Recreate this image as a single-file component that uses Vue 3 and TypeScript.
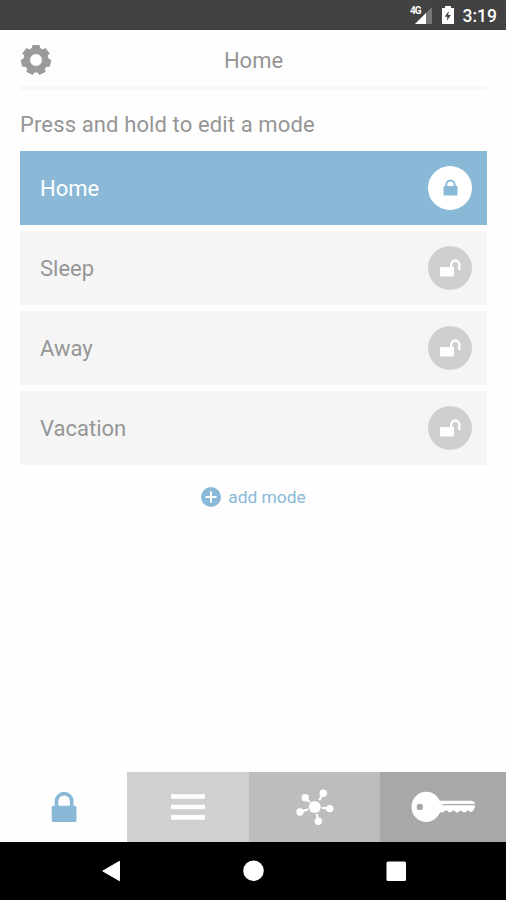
<script setup lang="ts">
import { ref } from 'vue'

interface Mode {
  name: string
}

const modes: Mode[] = [{ name: 'Home' }, { name: 'Sleep' }, { name: 'Away' }, { name: 'Vacation' }]
const active = ref('Home')

function gearPath(teeth: number, outer: number, inner: number): string {
  const step = (Math.PI * 2) / teeth
  const points: string[] = []
  for (let i = 0; i < teeth; i++) {
    const a = i * step - Math.PI / 2
    const corners: [number, number][] = [
      [-0.34, inner],
      [-0.24, outer],
      [0.24, outer],
      [0.34, inner],
    ]
    for (const [offset, r] of corners) {
      const t = a + offset * step
      points.push(`${(r * Math.cos(t)).toFixed(2)} ${(r * Math.sin(t)).toFixed(2)}`)
    }
  }
  return `M${points.join('L')}ZM6.4 0A6.4 6.4 0 1 0 -6.4 0A6.4 6.4 0 1 0 6.4 0Z`
}

const gear = gearPath(7, 14.8, 12.2)
</script>

<template>
  <div class="screen">
    <div class="status">
      <svg class="signal" width="24" height="20" viewBox="0 0 24 20">
        <path d="M22 2V19H5Z" fill="#777" />
        <path d="M16 8V19H5Z" fill="#fff" />
        <text x="0" y="9" class="network">4G</text>
      </svg>
      <svg class="battery" width="14" height="20" viewBox="0 0 14 20">
        <path d="M4 1H10V3H13V19H1V3H4Z" fill="#fff" />
        <path d="M7.8 6L3.7 11.8H6.4L5.7 16L9.9 10H7.2Z" fill="#424242" />
      </svg>
      <span class="clock">3:19</span>
    </div>

    <header class="header">
      <svg class="gear" width="32" height="32" viewBox="-16 -16 32 32">
        <path :d="gear" fill="#9a9a9a" stroke="#9a9a9a" stroke-width="1" stroke-linejoin="round" fill-rule="evenodd" />
      </svg>
      <h1 class="title">Home</h1>
    </header>

    <main class="content">
      <p class="hint">Press and hold to edit a mode</p>
      <div class="modes">
        <div
          v-for="mode in modes"
          :key="mode.name"
          class="mode"
          :class="{ active: mode.name === active }"
          @click="active = mode.name"
        >
          <span class="name">{{ mode.name }}</span>
          <span class="badge">
            <svg v-if="mode.name === active" width="44" height="44" viewBox="0 0 44 44">
              <rect x="15.5" y="20" width="14" height="9.5" rx="0.8" fill="#8ab9d8" />
              <path d="M18.3 21V18.7A4.2 4.2 0 0 1 26.7 18.7V21" fill="none" stroke="#8ab9d8" stroke-width="2" />
            </svg>
            <svg v-else width="44" height="44" viewBox="0 0 44 44">
              <rect x="12" y="21" width="14" height="9.5" rx="0.8" fill="#fff" />
              <path d="M23.2 22V18.6A4.1 4.1 0 0 1 31.4 18.6V24" fill="none" stroke="#fff" stroke-width="2.3" />
            </svg>
          </span>
        </div>
      </div>
      <button class="add" type="button">
        <svg width="20" height="20" viewBox="0 0 20 20">
          <circle cx="10" cy="10" r="10" fill="#8ab9d8" />
          <path d="M10 4.5V15.5M4.5 10H15.5" stroke="#fff" stroke-width="2" />
        </svg>
        <span>add mode</span>
      </button>
    </main>

    <nav class="tabs">
      <div class="tab lock">
        <svg width="26" height="32" viewBox="0 0 26 32">
          <rect x="0.7" y="14.7" width="24.8" height="16.2" rx="1.6" fill="#8ab9d8" />
          <path d="M5.5 16V10.2A7.6 7.6 0 0 1 20.7 10.2V16" fill="none" stroke="#8ab9d8" stroke-width="3.6" />
        </svg>
      </div>
      <div class="tab list">
        <svg width="36" height="28" viewBox="0 0 36 28">
          <path
            d="M1.5 1.7H34.5V5.2H1.5ZM1.5 12.2H34.5V15.7H1.5ZM1.5 22.5H34.5V26.2H1.5Z"
            fill="#fff" stroke="#fff" stroke-width="0.9" stroke-linejoin="round"
          />
        </svg>
      </div>
      <div class="tab devices">
        <svg width="40" height="38" viewBox="0 0 40 38">
          <path
            d="M10.2 9.7L15 14.3M28.3 5.2L24.2 12.2M5 24L13.3 21.3M34.8 20.6L27 19.9M23.3 33.2L21.8 26"
            stroke="#fff" stroke-width="2.2"
          />
          <g fill="#fff">
            <circle cx="19.8" cy="19" r="6" />
            <circle cx="10.2" cy="9.7" r="3.7" />
            <circle cx="28.3" cy="5.2" r="3.7" />
            <circle cx="5" cy="24" r="3.7" />
            <circle cx="34.8" cy="20.6" r="3.7" />
            <circle cx="23.3" cy="33.2" r="3.7" />
          </g>
        </svg>
      </div>
      <div class="tab key">
        <svg width="66" height="32" viewBox="0 0 66 32">
          <path
            d="M29 9.8H61.5Q64.8 10 64.8 13V16.5L63.3 19.6Q61 22.4 58.8 19.8Q57.5 18.6 56.5 20.5Q54 22.7 52 20.2Q50.5 18.6 49.3 20.3Q47 22.8 44.8 20.2Q43.3 18.6 42 20.3Q39.8 22.6 37.5 20Q36 18.5 34.5 20.5L31.8 21.6H28Z"
            fill="#fff"
          />
          <path d="M32.5 13.6H64.8" stroke="#a8a8a8" stroke-width="1.1" />
          <ellipse cx="16.2" cy="15.9" rx="14.7" ry="15.1" fill="#fff" />
          <circle cx="9.8" cy="15.9" r="3.2" fill="#a8a8a8" />
        </svg>
      </div>
    </nav>

    <div class="system">
      <svg width="20" height="22" viewBox="0 0 20 22">
        <path d="M1.8 11L18.5 1.3V20.7Z" fill="#fff" stroke="#fff" stroke-width="1" stroke-linejoin="round" />
      </svg>
      <svg width="22" height="22" viewBox="0 0 22 22"><circle cx="10.5" cy="10.7" r="10.3" fill="#fff" /></svg>
      <svg width="20" height="20" viewBox="0 0 20 20"><rect x="0.5" y="0.6" width="19.5" height="19.4" rx="1.5" fill="#fff" /></svg>
    </div>
  </div>
</template>

<style>
body {
  margin: 0;
}
</style>

<style scoped>
.screen {
  box-sizing: border-box;
  width: 506px;
  height: 900px;
  display: flex;
  flex-direction: column;
  overflow: hidden;
  background: #fefefe;
  color: #959595;
  font-family: Roboto, "Liberation Sans", sans-serif;
  font-size: 22px;
}
svg {
  display: block;
  flex: none;
}
.status {
  height: 30px;
  flex: none;
  box-sizing: border-box;
  display: flex;
  align-items: center;
  justify-content: flex-end;
  padding-right: 9px;
  background: #424242;
  color: #fff;
}
.signal {
  margin-right: 7px;
}
.network {
  font-size: 10px;
  font-weight: 700;
  letter-spacing: -1px;
  fill: #fff;
}
.battery {
  margin-right: 8px;
}
.clock {
  font-size: 17.5px;
  font-weight: 500;
  line-height: 30px;
  padding-top: 2px;
}
.header {
  height: 60px;
  flex: none;
  box-sizing: border-box;
  margin: 0 19px 0 20px;
  display: grid;
  grid-template-columns: 32px 1fr 32px;
  align-items: center;
  border-bottom: 4px solid #f8f8f8;
}
.gear {
  margin-top: 3px;
}
.title {
  margin: 6px 0 0;
  font-size: 22px;
  font-weight: 400;
  line-height: 26px;
  text-align: center;
}
.content {
  flex: 1;
  padding: 21px 19px 0 20px;
}
.hint {
  margin: 0;
  line-height: 28px;
  letter-spacing: 0.12px;
}
.modes {
  display: grid;
  gap: 6px;
  margin-top: 12px;
}
.mode {
  height: 74px;
  box-sizing: border-box;
  display: flex;
  align-items: center;
  justify-content: space-between;
  padding: 0 15px 0 20px;
  background: #f5f5f5;
}
.name {
  line-height: 26px;
  padding-top: 2px;
}
.badge {
  width: 44px;
  height: 44px;
  border-radius: 50%;
  background: #cfcfcf;
}
.mode.active {
  background: #8ab9d8;
  color: #fff;
}
.active .badge {
  background: #fff;
}
.add {
  display: flex;
  align-items: center;
  gap: 7px;
  margin: 20px auto 0;
  padding: 0;
  border: 0;
  background: none;
  color: #8ab9d8;
  font: inherit;
  font-size: 17.4px;
  line-height: 24px;
}
.tabs {
  height: 70px;
  flex: none;
  display: grid;
  grid-template-columns: 127px 122px 131px 126px;
}
.tab {
  display: flex;
  align-items: center;
  justify-content: center;
}
.list {
  background: #d0d0d0;
}
.devices {
  background: #bdbdbd;
}
.key {
  background: #a8a8a8;
}
.system {
  height: 58px;
  flex: none;
  box-sizing: border-box;
  display: flex;
  align-items: center;
  justify-content: space-between;
  padding: 0 100px 0 101px;
  background: #000;
}
</style>
